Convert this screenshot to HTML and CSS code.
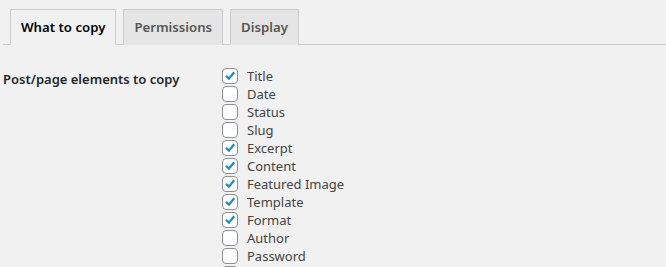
FILE: index.html
```html
<!DOCTYPE html>
<html lang="en">
<head>
    <meta charset="UTF-8">
    <title>Duplicate Post Options</title>
    <link rel="stylesheet" href="styles.css">
</head>
<body>
    <div class="wrap">
        <h2 class="nav-tab-wrapper">
            <a class="nav-tab nav-tab-active" href="#">What to copy</a>
            <a class="nav-tab" href="#">Permissions</a>
            <a class="nav-tab" href="#">Display</a>
        </h2>

        <div class="form-row">
            <div class="form-label">Post/page elements to copy</div>
            <div class="form-field">
                <label class="check"><span class="box on"><svg viewBox="0 0 16 16"><path d="M3.5 7.8 L6.8 11 L12.8 3.8"/></svg></span>Title</label>
                <label class="check"><span class="box"></span>Date</label>
                <label class="check"><span class="box"></span>Status</label>
                <label class="check"><span class="box"></span>Slug</label>
                <label class="check"><span class="box on"><svg viewBox="0 0 16 16"><path d="M3.5 7.8 L6.8 11 L12.8 3.8"/></svg></span>Excerpt</label>
                <label class="check"><span class="box on"><svg viewBox="0 0 16 16"><path d="M3.5 7.8 L6.8 11 L12.8 3.8"/></svg></span>Content</label>
                <label class="check"><span class="box on"><svg viewBox="0 0 16 16"><path d="M3.5 7.8 L6.8 11 L12.8 3.8"/></svg></span>Featured Image</label>
                <label class="check"><span class="box on"><svg viewBox="0 0 16 16"><path d="M3.5 7.8 L6.8 11 L12.8 3.8"/></svg></span>Template</label>
                <label class="check"><span class="box on"><svg viewBox="0 0 16 16"><path d="M3.5 7.8 L6.8 11 L12.8 3.8"/></svg></span>Format</label>
                <label class="check"><span class="box"></span>Author</label>
                <label class="check"><span class="box"></span>Password</label>
                <label class="check"><span class="box"></span>Attachments</label>
            </div>
        </div>
    </div>
</body>
</html>
```

FILE: styles.css
```css
body {
    margin: 0;
    background: #f1f1f1;
    color: #23282d;
    font-family: "Noto Sans", "Open Sans", sans-serif;
    font-size: 13px;
}
.wrap {
    padding-left: 3px;
}
.nav-tab-wrapper {
    margin: 0;
    padding-top: 9px;
    border-bottom: 1px solid #ccc;
    display: flex;
    font-size: 13.2px;
    font-weight: 600;
}
.nav-tab {
    margin-left: 7px;
    margin-bottom: -1px;
    padding: 5px 10px;
    line-height: 24px;
    border: 1px solid #ccc;
    border-bottom: none;
    background: #e5e5e5;
    color: #555;
    text-decoration: none;
}
.nav-tab-active {
    background: #f1f1f1;
    color: #000;
    border-bottom: 1px solid #f1f1f1;
    margin-bottom: -1px;
}
.form-row {
    display: flex;
    padding-top: 22px;
}
.form-label {
    width: 219px;
    font-size: 13px;
    font-weight: 600;
    line-height: 18px;
    padding-top: 3px;
}
.form-field {
    display: flex;
    flex-direction: column;
}
.check {
    display: flex;
    align-items: center;
    height: 18px;
    line-height: 18px;
    color: #444;
}
.box {
    width: 14px;
    height: 14px;
    border: 1px solid #8c8f94;
    border-radius: 4px;
    background: #fff;
    margin-right: 9px;
    display: flex;
}
.box svg {
    width: 14px;
    height: 14px;
    fill: none;
    stroke: #1e8cbe;
    stroke-width: 2.6;
}
```
